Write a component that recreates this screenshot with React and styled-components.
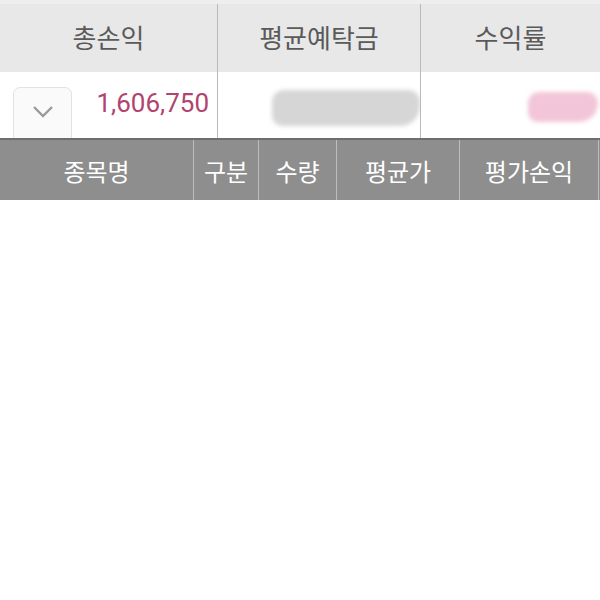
import React from "react";
import styled, { createGlobalStyle } from "styled-components";

const GlobalStyle = createGlobalStyle`
  html, body {
    margin: 0;
    padding: 0;
    background: #ffffff;
    font-family: "Noto Sans CJK KR", Roboto, "Noto Sans", sans-serif;
  }
`;

const Page = styled.div`
  width: 600px;
  height: 600px;
  background: #ffffff;
  overflow: hidden;
`;

const Summary = styled.div`
  display: grid;
  grid-template-columns: 217px 203px 180px;
  border-top: 4px solid #eeeeee;
`;

const HeadCell = styled.div`
  height: 68px;
  background: #e8e8e8;
  display: flex;
  align-items: center;
  justify-content: center;
  padding-bottom: 4px;
  box-sizing: border-box;
  font-size: 26px;
  color: #5a5a5a;
  border-left: ${(p) => (p.$first ? "none" : "1px solid #b9b9b9")};
`;

const ValueCell = styled.div`
  height: 66px;
  background: #ffffff;
  display: flex;
  align-items: center;
  justify-content: ${(p) => p.$justify || "center"};
  padding: ${(p) => p.$pad || "0"};
  box-sizing: border-box;
  border-left: ${(p) => (p.$first ? "none" : "1px solid #b9b9b9")};
  overflow: hidden;
`;

const ToggleButton = styled.div`
  width: 59px;
  height: 60px;
  margin-top: 15px;
  align-self: flex-start;
  border: 1px solid #e2e2e2;
  border-radius: 7px;
  background: #fafafa;
  box-sizing: border-box;
  display: flex;
  align-items: flex-start;
  justify-content: center;
  padding-top: 17px;
`;

const Amount = styled.div`
  font-family: Roboto, "Noto Sans", sans-serif;
  font-size: 26px;
  color: #b2436e;
  margin-left: auto;
  margin-right: 8px;
  margin-bottom: 4px;
`;

const Smudge = styled.div`
  width: ${(p) => p.$w}px;
  height: ${(p) => p.$h}px;
  margin: ${(p) => p.$m};
  background: ${(p) => p.$bg};
  border-radius: 12px 12px 20px 10px;
  filter: blur(2px);
`;

const ListHeader = styled.div`
  display: grid;
  grid-template-columns: 193px 65px 78px 123px 139px 2px;
  height: 62px;
  background: #8e8e8e;
  border-top: 2px solid #6e6e6e;
  box-sizing: border-box;
`;

const ListCell = styled.div`
  display: flex;
  align-items: center;
  justify-content: center;
  color: #ffffff;
  font-size: 24px;
  font-weight: 400;
  border-left: ${(p) => (p.$first ? "none" : "1px solid #bdbdbd")};
`;

const Chevron = () => (
  <svg width="22" height="13" viewBox="0 0 22 13">
    <path d="M2 2 L11 11 L20 2" fill="none" stroke="#9a9a9a" strokeWidth="2.4" />
  </svg>
);

export default function App() {
  return (
    <Page>
      <GlobalStyle />
      <Summary>
        <HeadCell $first>총손익</HeadCell>
        <HeadCell>평균예탁금</HeadCell>
        <HeadCell>수익률</HeadCell>
        <ValueCell $first $justify="flex-start" $pad="0 0 0 13px">
          <ToggleButton>
            <Chevron />
          </ToggleButton>
          <Amount>1,606,750</Amount>
        </ValueCell>
        <ValueCell $justify="flex-start">
          <Smudge $w={150} $h={36} $m="6px 0 0 54px" $bg="#d6d6d6" />
        </ValueCell>
        <ValueCell $justify="flex-end">
          <Smudge $w={70} $h={30} $m="4px 2px 0 0" $bg="#f2c6d8" />
        </ValueCell>
      </Summary>
      <ListHeader>
        <ListCell $first>종목명</ListCell>
        <ListCell>구분</ListCell>
        <ListCell>수량</ListCell>
        <ListCell>평균가</ListCell>
        <ListCell>평가손익</ListCell>
        <ListCell />
      </ListHeader>
    </Page>
  );
}
